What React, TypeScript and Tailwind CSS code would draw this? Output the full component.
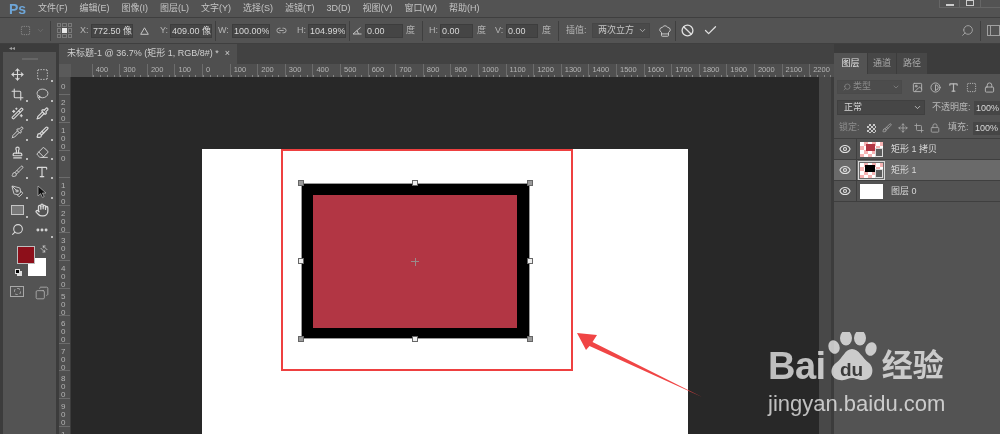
import React from "react";
import { Move, Crop, Lasso, WandSparkles, Pipette, Brush, Stamp, Eraser, Type, PenTool, Hand, Search, Ellipsis, Eye, Ban, Check, Link2, ChevronDown, Lock, Image, Contrast, SquareDashed, ArrowLeftRight, Copy, ChefHat } from "lucide-react";

const menus = ["文件(F)", "编辑(E)", "图像(I)", "图层(L)", "文字(Y)", "选择(S)", "滤镜(T)", "3D(D)", "视图(V)", "窗口(W)", "帮助(H)"];
const hLabels = ["400", "300", "200", "100", "0", "100", "200", "300", "400", "500", "600", "700", "800", "900", "1000", "1100", "1200", "1300", "1400", "1500", "1600", "1700", "1800", "1900", "2000", "2100", "2200"];
const vLabels = ["200", "100", "0", "100", "200", "300", "400", "500", "600", "700", "800", "900", "1000"];

function Sep() {
  return <div className="w-px h-[20px] bg-[#3f3f3f] shrink-0" />;
}

function Field({ value, className }: { value: string; className: string }) {
  return (
    <div className={"h-[14px] bg-[#454545] border border-[#3d3d3d] text-[#d8d8d8] text-[9px] leading-[12px] pl-px overflow-hidden whitespace-nowrap shrink-0 " + className}>
      {value}
    </div>
  );
}

function Tool({ children, more = true }: { children: React.ReactNode; more?: boolean }) {
  return (
    <div className="relative flex items-center justify-center text-[#d9d9d9]">
      {children}
      {more && <span className="absolute right-[2px] bottom-[2px] w-[2px] h-[2px] bg-[#bbbbbb]" />}
    </div>
  );
}

function HRuler() {
  return (
    <div className="h-[13px] bg-[#4f4f4f] flex overflow-hidden shrink-0">
      <div className="w-[12px] h-full bg-[#5a5a5a] shrink-0" />
      <div className="w-[20.7px] shrink-0" />
      {hLabels.map((l, i) => (
        <div key={i} className="w-[27.6px] shrink-0 border-l border-[#6c6c6c] pl-[3px] text-[7.5px] leading-[11px] text-[#b4b4b4] bg-[repeating-linear-gradient(90deg,#858585_0,#858585_1px,transparent_1px,transparent_6.9px)] bg-[length:100%_2px] bg-bottom bg-no-repeat">
          {l}
        </div>
      ))}
    </div>
  );
}

function VRuler() {
  const Cell = ({ text }: { text: string }) => (
    <div className="h-[27.6px] shrink-0 border-t border-[#6c6c6c] flex flex-col items-start pl-[2px] pt-[4px] text-[8px] leading-[8px] text-[#b4b4b4]">
      {text.split("").map((c, i) => (
        <span key={i}>{c}</span>
      ))}
    </div>
  );
  return (
    <div className="w-[12px] bg-[#4f4f4f] flex flex-col overflow-hidden shrink-0 border-r border-[#3c3c3c]">
      <div className="h-[17.4px] shrink-0 flex flex-col justify-end items-start pl-[2px] pb-[3px] text-[8px] leading-[8px] text-[#b4b4b4]">
        <span>0</span>
      </div>
      {vLabels.map((t, i) => (
        <Cell key={i} text={t} />
      ))}
    </div>
  );
}

function Handle({ className, corner }: { className: string; corner?: boolean }) {
  return (
    <span className={"absolute w-[6px] h-[6px] border border-[#666666] " + (corner ? "bg-[#9a9a9a] " : "bg-[#eeeeee] ") + className} />
  );
}

function Thumb({ children, plain, selected }: { children?: React.ReactNode; plain?: boolean; selected?: boolean }) {
  return (
    <div className={"relative w-[23px] h-[15px] shrink-0 " + (plain ? "bg-white" : "bg-[repeating-conic-gradient(#f6b3b3_0_25%,#ffffff_0_50%)] bg-[length:8px_8px]") + (selected ? " outline outline-1 outline-offset-1 outline-[#d8d8d8]" : "")}>
      {children}
      {!plain && <span className="absolute right-0 bottom-0 w-[8px] h-[9px] bg-[#5c5c5c] border border-[#dcdcdc]" />}
    </div>
  );
}

function Layer({ name, selected, children, plain }: { name: string; selected?: boolean; children?: React.ReactNode; plain?: boolean }) {
  return (
    <div className={"h-[21px] flex items-center border-b border-[#3f3f3f] " + (selected ? "bg-[#6a6a6a]" : "bg-[#535353]")}>
      <div className="w-[23px] h-full flex items-center justify-center border-r border-[#3f3f3f] text-[#e2e2e2] shrink-0">
        <Eye size={12} strokeWidth={2.2} />
      </div>
      <div className="ml-[3px]">
        <Thumb plain={plain} selected={selected}>{children}</Thumb>
      </div>
      <span className="ml-[8px] pt-px text-[9px] text-[#d8d8d8] whitespace-nowrap">{name}</span>
    </div>
  );
}

export default function App() {
  return (
    <div className="relative w-[1000px] h-[434px] overflow-hidden flex flex-col bg-[#535353] text-[#cfcfcf] [font-family:'Liberation_Sans','Noto_Sans_CJK_SC',sans-serif] blur-[0.4px]">
      {/* menu bar */}
      <div className="h-[18px] shrink-0 flex items-center border-b border-[#3f3f3f] pl-[9px]">
        <span className="w-[29px] text-[14px] leading-[14px] font-bold text-[#6ea6d8]">Ps</span>
        <div className="flex gap-[12px] text-[9px] text-[#c4c4c4]">
          {menus.map((m) => (
            <span key={m} className="whitespace-nowrap">{m}</span>
          ))}
        </div>
        <div className="ml-auto mr-[-2px] h-full flex items-start">
          <div className="w-[21px] h-[8px] border border-t-0 border-[#666666] flex justify-center items-end pb-px"><span className="w-[8px] h-[2px] bg-[#cccccc]" /></div>
          <div className="w-[21px] h-[8px] border border-t-0 border-l-0 border-[#666666] flex justify-center"><span className="w-[8px] h-[6px] border border-[#cccccc]" /></div>
          <div className="w-[21px] h-[8px] border-b border-[#666666]" />
        </div>
      </div>

      {/* options bar */}
      <div className="h-[26px] shrink-0 flex items-center border-b border-[#3f3f3f] text-[9px] text-[#b4b4b4] whitespace-nowrap">
        <SquareDashed size={11} strokeWidth={1.6} className="ml-[20px] text-[#9a9a9a] shrink-0" />
        <ChevronDown size={9} className="ml-[5px] text-[#707070] shrink-0" />
        <div className="ml-[5px]"><Sep /></div>
        <div className="ml-[6px] w-[15px] h-[15px] grid grid-cols-3 gap-px shrink-0">
          {[0, 1, 2, 3, 4, 5, 6, 7, 8].map((i) => (
            <span key={i} className={i === 4 ? "bg-[#e8e8e8]" : "border border-[#7a7a7a]"} />
          ))}
        </div>
        <span className="ml-[8px] w-[9px]">X:</span>
        <Field value="772.50 像素" className="ml-[2px] w-[42px]" />
        <svg width="9" height="8" viewBox="0 0 9 8" className="ml-[7px] shrink-0"><path d="M4.5 .8 8.3 7.3H.7Z" fill="none" stroke="#c4c4c4" strokeWidth="1" /></svg>
        <span className="ml-[11px] w-[8px]">Y:</span>
        <Field value="409.00 像素" className="ml-[2px] w-[42px]" />
        <div className="ml-[3px]"><Sep /></div>
        <span className="ml-[2px] w-[11px]">W:</span>
        <Field value="100.00%" className="ml-[3px] w-[38px]" />
        <Link2 size={11} className="ml-[6px] shrink-0" />
        <span className="ml-[10px] w-[9px]">H:</span>
        <Field value="104.99%" className="ml-[2px] w-[38px]" />
        <div className="ml-[3px]"><Sep /></div>
        <svg width="10" height="8" viewBox="0 0 10 8" className="ml-[2px] shrink-0"><path d="M8.5 .5 1 7H9.5M5 3.5 6.500 7" fill="none" stroke="#c4c4c4" strokeWidth="1" /></svg>
        <Field value="0.00" className="ml-[3px] w-[38px]" />
        <span className="ml-[3px] w-[9px]">度</span>
        <div className="ml-[7px]"><Sep /></div>
        <span className="ml-[6px] w-[9px]">H:</span>
        <Field value="0.00" className="ml-[2px] w-[33px]" />
        <span className="ml-[4px] w-[9px]">度</span>
        <span className="ml-[9px] w-[8px]">V:</span>
        <Field value="0.00" className="ml-[3px] w-[32px]" />
        <span className="ml-[4px] w-[9px]">度</span>
        <div className="ml-[7px]"><Sep /></div>
        <span className="ml-[7px] w-[22px]">插值:</span>
        <div className="ml-[4px] w-[58px] h-[15px] bg-[#4a4a4a] border border-[#464646] flex items-center pl-[5px] text-[#c4c4c4] shrink-0">
          两次立方
          <ChevronDown size={9} className="ml-auto mr-[2px]" />
        </div>
        <ChefHat size={14} strokeWidth={1.5} className="ml-[8px] text-[#d4d4d4] shrink-0" />
        <div className="ml-[3px]"><Sep /></div>
        <Ban size={13} strokeWidth={2.4} className="ml-[5px] text-[#e0e0e0] shrink-0" />
        <Check size={15} strokeWidth={2} className="ml-[9px] text-[#e0e0e0] shrink-0" />
        <Search size={13} strokeWidth={1.8} className="ml-auto text-[#a0a0a0] shrink-0 -scale-x-100" />
        <div className="ml-[6px]"><Sep /></div>
        <div className="ml-[6px] w-[13px] h-[11px] border border-[#a0a0a0] shrink-0 flex"><span className="w-[3px] border-r border-[#a0a0a0]" /></div>
      </div>

      {/* main area */}
      <div className="flex-1 min-h-0 flex bg-[#3c3c3c]">
        {/* tools */}
        <div className="ml-[3px] w-[53px] shrink-0 bg-[#535353] flex flex-col">
          <div className="h-[8px] bg-[#3c3c3c] pl-[6px] text-[6px] leading-[8px] text-[#a0a0a0]">◂◂</div>
          <div className="h-[13px] flex justify-center items-center"><span className="w-[16px] h-[2px] bg-[#666666]" /></div>
          <div className="grid grid-cols-2 auto-rows-[19.4px] px-[1.5px]">
            <Tool more={false}><Move size={13} strokeWidth={2} /></Tool>
            <Tool><SquareDashed size={13} strokeWidth={1.6} /></Tool>
            <Tool><Crop size={13} strokeWidth={2} /></Tool>
            <Tool><Lasso size={13} strokeWidth={1.6} /></Tool>
            <Tool><WandSparkles size={13} strokeWidth={2} /></Tool>
            <Tool><Pipette size={13} strokeWidth={2.2} /></Tool>
            <Tool><Pipette size={13} strokeWidth={1.8} /></Tool>
            <Tool><Brush size={13} strokeWidth={2.2} /></Tool>
            <Tool><Stamp size={13} strokeWidth={2.2} /></Tool>
            <Tool><Eraser size={13} strokeWidth={1.8} /></Tool>
            <Tool><Brush size={13} strokeWidth={1.6} /></Tool>
            <Tool><Type size={14} strokeWidth={2} /></Tool>
            <Tool><PenTool size={13} strokeWidth={1.6} /></Tool>
            <Tool>
              <svg width="12" height="13" viewBox="0 0 12 13"><path d="M2 1V11L4.6 8.6 6.4 12.4 8.2 11.6 6.4 8H10Z" fill="#111111" stroke="#cccccc" strokeWidth=".6" /></svg>
            </Tool>
            <Tool><span className="w-[13px] h-[10px] bg-[#777777] border border-[#c4c4c4]" /></Tool>
            <Tool more={false}><Hand size={14} strokeWidth={2.2} /></Tool>
            <Tool more={false}><Search size={13} strokeWidth={2} className="-scale-x-100" /></Tool>
            <Tool><Ellipsis size={14} strokeWidth={3} /></Tool>
          </div>
          {/* colours */}
          <div className="relative h-[34px] mt-[6px] ml-[14px] shrink-0">
            <span className="absolute left-[11px] top-[12px] w-[18px] h-[18px] bg-white" />
            <span className="absolute left-0 top-0 w-[18px] h-[18px] bg-[#8d0f1a] border border-[#bdbdbd]" />
            <ArrowLeftRight size={8} strokeWidth={2} className="absolute left-[23px] top-[-1px] text-[#dddddd] rotate-45" />
            <span className="absolute left-0 top-[25px] w-[5px] h-[5px] bg-[#dddddd]" />
            <span className="absolute left-[-2px] top-[23px] w-[5px] h-[5px] bg-black border border-[#dddddd]" />
          </div>
          <div className="mt-[6px] flex items-start pl-[7px] gap-[11px] text-[#b4b4b4]">
            <span className="w-[14px] h-[11px] border border-[#a8a8a8] flex items-center justify-center"><span className="w-[7px] h-[7px] rounded-full border border-dashed border-[#a8a8a8]" /></span>
            <Copy size={14} strokeWidth={1.4} className="-scale-x-100" />
          </div>
        </div>
        <div className="w-[3px] shrink-0" />

        {/* document */}
        <div className="w-[775px] shrink-0 flex flex-col">
          <div className="h-[20px] flex bg-[#424242] shrink-0">
            <div className="w-[178px] bg-[#4f4f4f] flex items-center pl-[8px] text-[9px] text-[#cfcfcf] whitespace-nowrap">
              未标题-1 @ 36.7% (矩形 1, RGB/8#) *
              <span className="ml-[6px]">×</span>
            </div>
          </div>
          <HRuler />
          <div className="flex-1 min-h-0 flex">
            <VRuler />
            <div className="w-[748px] shrink-0 bg-[#282828] pl-[131px] pt-[72px] overflow-hidden">
              <div className="w-[486px] h-[300px] bg-white pl-[79px]">
                <div className="w-[292px] h-[222px] border-2 border-[#ee4040] pl-[18px] pt-[32px]">
                  <div className="relative w-[229px] h-[156px] bg-black border border-[#9a9a9a] pt-[11px] pl-[11px] pr-[12px] pb-[10px]">
                    <div className="w-full h-full bg-[#b23644] flex items-center justify-center">
                      <span className="relative w-[8px] h-[8px]">
                        <span className="absolute left-[3.5px] top-0 w-px h-[8px] bg-[#9a8a8a]" />
                        <span className="absolute top-[3.5px] left-0 h-px w-[8px] bg-[#9a8a8a]" />
                      </span>
                    </div>
                    <Handle corner className="left-[-4px] top-[-4px]" />
                    <Handle className="left-[110px] top-[-4px]" />
                    <Handle corner className="right-[-4px] top-[-4px]" />
                    <Handle className="left-[-4px] top-[74px]" />
                    <Handle className="right-[-4px] top-[74px]" />
                    <Handle corner className="left-[-4px] bottom-[-4px]" />
                    <Handle className="left-[110px] bottom-[-4px]" />
                    <Handle corner className="right-[-4px] bottom-[-4px]" />
                  </div>
                </div>
              </div>
            </div>
            <div className="w-[12px] bg-[#484848] shrink-0" />
          </div>
        </div>

        {/* panels */}
        <div className="flex-1 min-w-0 flex flex-col">
          <div className="h-[9px] shrink-0" />
          <div className="h-[21px] flex text-[9px] shrink-0">
            <div className="w-[33px] bg-[#535353] flex items-center justify-center text-[#e0e0e0]">图层</div>
            <div className="w-[29px] bg-[#474747] border-l border-[#3c3c3c] flex items-center justify-center text-[#a8a8a8]">通道</div>
            <div className="w-[31px] bg-[#474747] border-l border-[#3c3c3c] flex items-center justify-center text-[#a8a8a8]">路径</div>
          </div>
          <div className="flex-1 bg-[#535353] flex flex-col">
            <div className="flex items-center mt-[6px] pl-[3px] h-[14px] shrink-0">
              <div className="w-[65px] h-[14px] bg-[#4c4c4c] border border-[#4a4a4a] flex items-center pl-[5px] text-[9px] text-[#8c8c8c] gap-[2px]">
                <Search size={8} className="-scale-x-100" /> 类型
                <ChevronDown size={8} className="ml-auto mr-px" />
              </div>
              <div className="ml-[10px] flex gap-[7px] text-[#b8b8b8]">
                <Image size={11} />
                <Contrast size={11} />
                <Type size={11} strokeWidth={2.6} />
                <SquareDashed size={11} />
                <Lock size={11} />
              </div>
            </div>
            <div className="flex items-center mt-[6px] pl-[3px] h-[15px] text-[9px] shrink-0">
              <div className="w-[88px] h-[15px] bg-[#464646] border border-[#404040] flex items-center pl-[6px] text-[#d8d8d8]">
                正常
                <ChevronDown size={9} className="ml-auto mr-[2px]" />
              </div>
              <span className="ml-[7px] w-[40px] text-[#b8b8b8] whitespace-nowrap">不透明度:</span>
              <span className="ml-[2px] flex-1 h-[14px] bg-[#464646] pl-[2px] leading-[14px] text-[#d8d8d8]">100%</span>
            </div>
            <div className="flex items-center mt-[7px] pl-[5px] h-[12px] text-[9px] shrink-0 text-[#8e8e8e]">
              <span className="w-[22px] whitespace-nowrap">锁定:</span>
              <div className="ml-[6px] flex gap-[6px] text-[#a8a8a8] items-center">
                <span className="w-[9px] h-[9px] bg-[repeating-conic-gradient(#c8c8c8_0_25%,#555555_0_50%)] bg-[length:4px_4px]" />
                <Brush size={10} />
                <Move size={10} />
                <Crop size={10} />
                <Lock size={10} />
              </div>
              <span className="ml-[8px] w-[23px] text-[#b8b8b8] whitespace-nowrap">填充:</span>
              <span className="ml-[2px] flex-1 h-[13px] bg-[#464646] pl-[2px] leading-[13px] text-[#d8d8d8]">100%</span>
            </div>
            <div className="mt-[4px] border-t border-[#3f3f3f]">
              <Layer name="矩形 1 拷贝"><span className="absolute left-[6px] top-[2px] w-[9px] h-[7px] bg-[#b23644]" /></Layer>
              <Layer name="矩形 1" selected><span className="absolute left-[5px] top-[2px] w-[10px] h-[7px] bg-black" /></Layer>
              <Layer name="图层 0" plain />
            </div>
          </div>
        </div>
      </div>

      {/* red annotation arrow */}
      <svg width="1000" height="434" viewBox="0 0 1000 434" className="absolute left-0 top-0 pointer-events-none">
        <path d="M577 333 597 335 592.500 342 702 397 589.500 346 586 350Z" fill="#f04545" />
      </svg>

      {/* watermark */}
      <div className="absolute left-[768px] top-[336px] w-[190px] pointer-events-none text-white/70">
        <div className="flex items-end h-[50px]">
          <span className="text-[38px] leading-[40px] font-bold tracking-[-0.5px]">Bai</span>
          <svg width="54" height="52" viewBox="0 0 54 52" className="shrink-0 mb-[2px]">
            <g fill="#ffffff" fillOpacity=".7">
              <ellipse cx="8" cy="15" rx="5.500" ry="7" transform="rotate(-20 8 15)" />
              <ellipse cx="20" cy="6" rx="6" ry="7.500" />
              <ellipse cx="34" cy="6" rx="6" ry="7.500" />
              <ellipse cx="45" cy="17" rx="5.500" ry="7" transform="rotate(20 45 17)" />
              <path d="M26 17C33 17 36 26 43 31 49 36 47 48 37 48 31 48 30 46 26 46 22 46 20 49 14 48 4 47 3 36 10 31 17 26 19 17 26 17Z" />
            </g>
            <text x="14" y="44" fontSize="19" fontWeight="700" fill="#3a3a3a" className="[font-family:'Liberation_Sans',sans-serif]">du</text>
          </svg>
          <span className="ml-[2px] text-[31px] leading-[40px] font-bold whitespace-nowrap">经验</span>
        </div>
        <div className="text-[22px] leading-[24px] mt-[6px] whitespace-nowrap">jingyan.baidu.com</div>
      </div>
    </div>
  );
}
